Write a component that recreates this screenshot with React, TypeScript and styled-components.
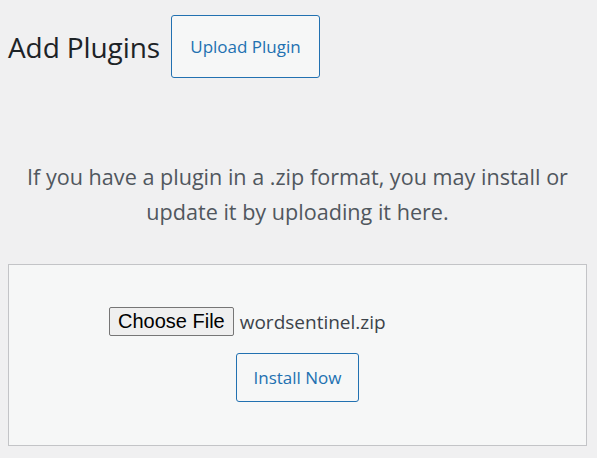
import React from 'react'
import styled, { createGlobalStyle } from 'styled-components'

const GlobalStyle = createGlobalStyle`
  html, body {
    margin: 0;
    padding: 0;
    background: #f0f0f1;
  }
  body {
    font-family: 'Open Sans', 'Noto Sans', sans-serif;
    color: #3c434a;
  }
`

const Page = styled.div`
  padding: 15px 10px 0 8px;
`

const Header = styled.div`
  display: flex;
  align-items: center;
  gap: 11px;
`

const Title = styled.h1`
  margin: 0;
  font-size: 28px;
  font-weight: 400;
  color: #1d2327;
  letter-spacing: -0.1px;
`

const OutlineButton = styled.button<{ $w: number; $h: number }>`
  box-sizing: border-box;
  width: ${(p) => p.$w}px;
  height: ${(p) => p.$h}px;
  padding: 0;
  border: 1px solid #2271b1;
  border-radius: 3px;
  background: #f6f7f7;
  color: #2271b1;
  font-family: inherit;
  font-size: 17px;
  cursor: pointer;
`

const Help = styled.p`
  margin: 81px 0 0;
  text-align: center;
  font-size: 21.6px;
  line-height: 35px;
  color: #50575e;
`

const UploadBox = styled.div`
  box-sizing: border-box;
  margin-top: 35px;
  border: 1px solid #c3c4c7;
  background: #f6f7f7;
`

const Form = styled.form`
  display: flex;
  flex-direction: column;
  align-items: center;
  padding: 42px 0 43px;
`

const FileRow = styled.label`
  display: flex;
  align-items: center;
  gap: 6px;
  width: 377px;
  cursor: pointer;
`

const HiddenInput = styled.input`
  display: none;
`

const ChooseButton = styled.span`
  box-sizing: border-box;
  display: inline-flex;
  align-items: center;
  height: 29px;
  padding: 0 8px;
  border: 1px solid #767676;
  border-radius: 2px;
  background: #efefef;
  color: #000;
  font-family: 'Liberation Sans', Arial, sans-serif;
  font-size: 20px;
`

const FileName = styled.span`
  font-size: 19px;
  color: #3c434a;
`

const InstallRow = styled.div`
  margin-top: 17px;
`

const App: React.FC = () => {
  const [fileName, setFileName] = React.useState('wordsentinel.zip')
  const handleOnChange = (evt: React.ChangeEvent<HTMLInputElement>): void => {
    const f = evt.target.files?.[0]
    if (f) setFileName(f.name)
  }
  return (
    <>
      <GlobalStyle />
      <Page>
        <Header>
          <Title>Add Plugins</Title>
          <OutlineButton type='button' $w={149} $h={63}>
            Upload Plugin
          </OutlineButton>
        </Header>
        <Help>
          If you have a plugin in a .zip format, you may install or update it
          by uploading it here.
        </Help>
        <UploadBox>
          <Form onSubmit={(e) => e.preventDefault()}>
            <FileRow>
              <HiddenInput type='file' name='pluginzip' accept='.zip' onChange={handleOnChange} />
              <ChooseButton>Choose File</ChooseButton>
              <FileName>{fileName}</FileName>
            </FileRow>
            <InstallRow>
              <OutlineButton type='submit' $w={123} $h={49}>
                Install Now
              </OutlineButton>
            </InstallRow>
          </Form>
        </UploadBox>
      </Page>
    </>
  )
}

export default App
